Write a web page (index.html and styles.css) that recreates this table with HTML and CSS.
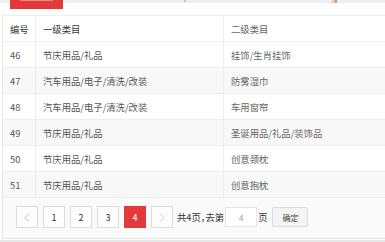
FILE: index.html
```html
<!DOCTYPE html>
<html lang="zh-CN">
<head>
  <meta charset="UTF-8" />
  <meta name="viewport" content="width=device-width, initial-scale=1.0" />
  <title>类目列表</title>
  <link rel="stylesheet" href="styles.css">
</head>
<body>
  <div class="page">
    <div class="panel">
      <!-- 工具栏（上半部分在视口外） -->
      <div class="toolbar">
        <div class="btn-add"><span class="btn-line"></span></div>
        <span class="tool-dot"></span>
        <span class="tool-icon"></span>
      </div>

      <!-- 表格 -->
      <div class="table-box">
        <div class="row head">
          <div class="cell">编号</div>
          <div class="cell">一级类目</div>
          <div class="cell">二级类目</div>
        </div>
        <div class="row">
          <div class="cell">46</div>
          <div class="cell">节庆用品/礼品</div>
          <div class="cell">挂饰/生肖挂饰</div>
        </div>
        <div class="row even">
          <div class="cell">47</div>
          <div class="cell">汽车用品/电子/清洗/改装</div>
          <div class="cell">防雾湿巾</div>
        </div>
        <div class="row">
          <div class="cell">48</div>
          <div class="cell">汽车用品/电子/清洗/改装</div>
          <div class="cell">车用窗帘</div>
        </div>
        <div class="row even">
          <div class="cell">49</div>
          <div class="cell">节庆用品/礼品</div>
          <div class="cell">圣诞用品/礼品/装饰品</div>
        </div>
        <div class="row">
          <div class="cell">50</div>
          <div class="cell">节庆用品/礼品</div>
          <div class="cell">创意颈枕</div>
        </div>
        <div class="row even">
          <div class="cell">51</div>
          <div class="cell">节庆用品/礼品</div>
          <div class="cell">创意抱枕</div>
        </div>

        <!-- 分页 -->
        <div class="pager">
          <a class="page-btn disabled">
            <svg width="6" height="9" viewBox="0 0 6 9"><path d="M5 0.5 L1 4.5 L5 8.5" fill="none" stroke="#bbb" stroke-width="1"/></svg>
          </a>
          <a class="page-btn">1</a>
          <a class="page-btn">2</a>
          <a class="page-btn">3</a>
          <a class="page-btn current">4</a>
          <a class="page-btn disabled">
            <svg width="6" height="9" viewBox="0 0 6 9"><path d="M1 0.5 L5 4.5 L1 8.5" fill="none" stroke="#ccc" stroke-width="1"/></svg>
          </a>
          <span class="skip-text">共4页，去第</span>
          <input class="skip-input" type="text" value="4">
          <span class="skip-text">页</span>
          <button class="skip-btn">确定</button>
        </div>
      </div>
    </div>
  </div>
</body>
</html>
```

FILE: styles.css
```css
* {
  margin: 0;
  padding: 0;
  box-sizing: border-box;
}

html, body {
  overflow: hidden;
}

body {
  font-family: "Noto Sans CJK SC", "Noto Sans", sans-serif;
  font-size: 9.33px;
  color: #555;
  background: #fff;
}

.page {
  width: 385px;
  height: 242px;
  overflow: hidden;
  background: #e8e8e8;
}

.panel {
  height: 240px;
  padding-left: 2px;
  background: #fff;
  border-top: 3px solid #eceef1;
}

/* 工具栏 */
.toolbar {
  display: flex;
  align-items: flex-start;
  height: 12px;
}

.btn-add {
  width: 53px;
  height: 9px;
  margin: -3px 0 0 8px;
  padding: 0 10px;
  background: #e3393b;
}

.btn-line {
  display: block;
  height: 1px;
  background: #ec8a8b;
}

.tool-dot {
  width: 2px;
  height: 2px;
  margin: -3px 0 0 121px;
  background: #c8c8c8;
}

.tool-icon {
  width: 5px;
  height: 3px;
  margin: -3px 0 0 146px;
  background: linear-gradient(90deg, #e9c9a8 0 50%, #9aa6b8 50% 100%);
}

/* 表格 */
.table-box {
  width: 420px;
  border-left: 1px solid #e6e6e6;
  border-top: 1px solid #eee;
}

.row {
  display: grid;
  grid-template-columns: 32px 188px 1fr;
  height: 26px;
  border-bottom: 1px solid #eee;
}

.row.even {
  background: #f8f8f8;
}

.cell {
  display: flex;
  align-items: center;
  padding: 0 7px;
  border-left: 1px solid #eee;
  white-space: nowrap;
}

.cell:first-child {
  border-left: none;
}

.head .cell {
  color: #333;
}

.row .cell:last-child {
  color: #666;
}

/* 分页 */
.pager {
  display: flex;
  align-items: center;
  height: 41px;
  padding: 0 0 2px 13px;
  background: #fafafa;
  border-bottom: 1px solid #e6e6e6;
}

.page-btn {
  display: flex;
  align-items: center;
  justify-content: center;
  width: 22px;
  height: 22px;
  margin-right: 5px;
  background: #fdfdfd;
  border: 1px solid #ddd;
  color: #333;
  font-size: 9px;
}

.page-btn.current {
  background: #e3393b;
  border-color: #e3393b;
  color: #fff;
}

.skip-text {
  margin-left: -1px;
  color: #333;
  font-feature-settings: "halt";
}

.skip-input {
  width: 32px;
  height: 20px;
  margin: 0 2px 0 1px;
  border: 1px solid #e6e6e6;
  background: #fff;
  color: #999;
  font: inherit;
  font-size: 8px;
  text-align: center;
  outline: none;
}

.skip-btn {
  width: 36px;
  height: 20px;
  margin-left: 5px;
  background: #f4f4f4;
  border: 1px solid #ddd;
  border-radius: 2px;
  color: #444;
  font: inherit;
  font-size: 8px;
}
```
